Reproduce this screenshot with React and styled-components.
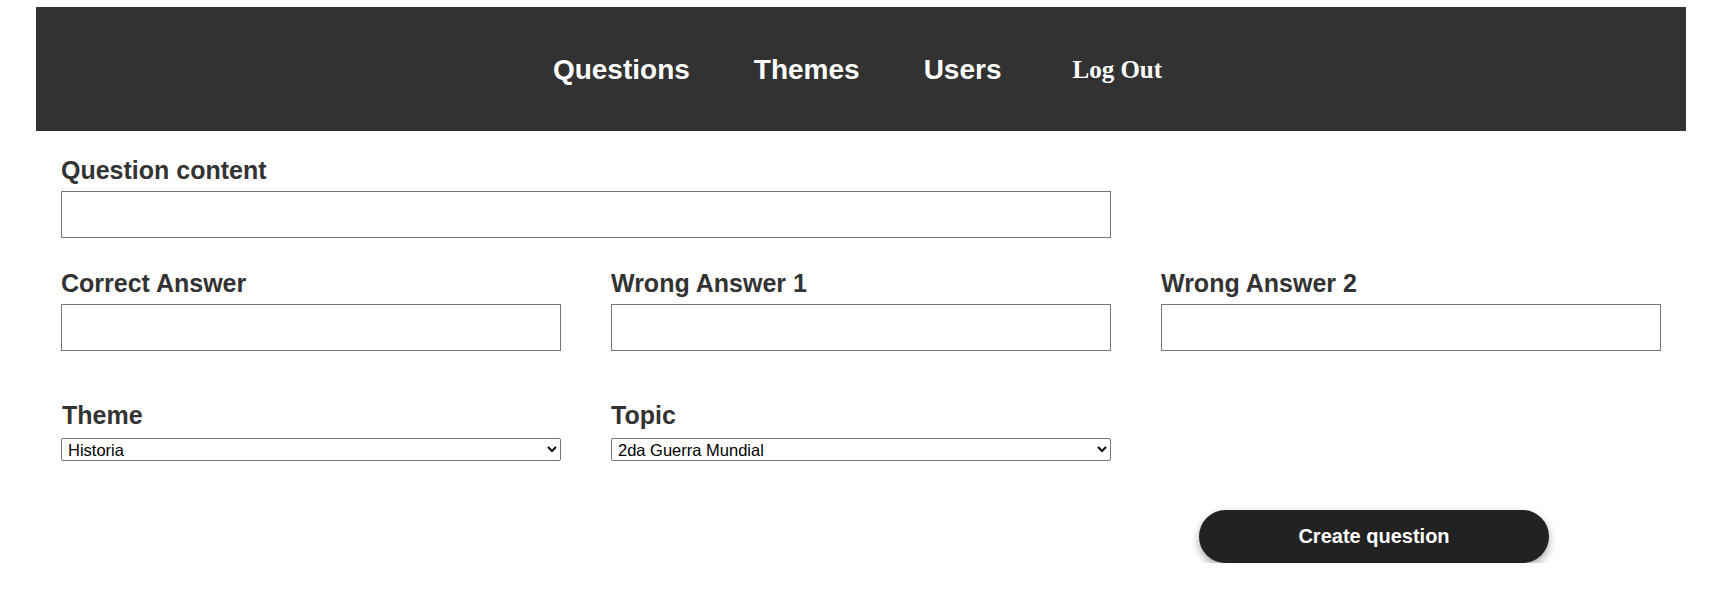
import React from "react";
import styled, { createGlobalStyle } from "styled-components";

const GlobalStyle = createGlobalStyle`
  html, body {
    margin: 0;
    padding: 0;
    background: #ffffff;
    font-family: "Liberation Sans", Arial, sans-serif;
  }
`;

const Page = styled.div`
  width: 1650px;
  margin: 7px 0 0 36px;
`;

const Header = styled.header`
  height: 124px;
  background: #323232;
  display: flex;
  align-items: center;
  justify-content: center;
  padding-right: 7px;
`;

const Nav = styled.nav`
  display: flex;
  align-items: center;
  gap: 64px;
  margin-top: 1px;
`;

const NavLink = styled.a`
  font-family: "Liberation Sans", Arial, sans-serif;
  font-size: 28px;
  font-weight: 700;
  color: #ffffff;
  text-decoration: none;
  line-height: 32px;
`;

const LogOut = styled.button`
  font-family: "Liberation Serif", "Times New Roman", serif;
  font-size: 25px;
  font-weight: 700;
  color: #ffffff;
  background: transparent;
  border: none;
  padding: 0;
  margin-left: 7px;
  line-height: 32px;
  cursor: pointer;
`;

const Form = styled.form`
  display: grid;
  grid-template-columns: repeat(3, 500px);
  column-gap: 50px;
  padding: 25px 25px 0;
`;

const Field = styled.div`
  display: flex;
  flex-direction: column;
  gap: ${(p) => p.$gap}px;
  grid-column: span ${(p) => p.$span || 1};
  margin-top: ${(p) => p.$top || 0}px;
`;

const Label = styled.label`
  font-size: 25px;
  font-weight: 700;
  color: #333333;
  line-height: 29px;
  padding-left: ${(p) => p.$indent || 0}px;
`;

const TextInput = styled.input`
  box-sizing: border-box;
  width: 100%;
  height: 47px;
  border: 1px solid #767676;
  border-radius: 0;
  background: #ffffff;
  padding: 0 8px;
  font-family: "Liberation Sans", Arial, sans-serif;
  font-size: 16px;
  outline: none;
`;

const Select = styled.select`
  box-sizing: border-box;
  width: 100%;
  height: 23px;
  border: 1px solid #767676;
  border-radius: 2px;
  background: #ffffff;
  color: #000000;
  font-family: "Liberation Sans", Arial, sans-serif;
  font-size: 16.5px;
  padding: 0 2px;
`;

const ButtonCell = styled.div`
  grid-column: 3;
  margin-top: 49px;
  padding-left: 38px;
`;

const SubmitButton = styled.button`
  width: 350px;
  height: 53px;
  border: none;
  border-radius: 27px;
  background: #222222;
  color: #ffffff;
  font-family: "Liberation Sans", Arial, sans-serif;
  font-size: 20px;
  font-weight: 700;
  box-shadow: 0 4px 9px rgba(0, 0, 0, 0.35);
  cursor: pointer;
`;

export default function App() {
  return (
    <>
      <GlobalStyle />
      <Page>
        <Header>
          <Nav>
            <NavLink href="#">Questions</NavLink>
            <NavLink href="#">Themes</NavLink>
            <NavLink href="#">Users</NavLink>
            <LogOut type="button">Log Out</LogOut>
          </Nav>
        </Header>
        <Form onSubmit={(e) => e.preventDefault()}>
          <Field $span={2} $gap={6}>
            <Label>Question content</Label>
            <TextInput type="text" />
          </Field>
          <div />
          <Field $gap={6} $top={31}>
            <Label>Correct Answer</Label>
            <TextInput type="text" />
          </Field>
          <Field $gap={6} $top={31}>
            <Label>Wrong Answer 1</Label>
            <TextInput type="text" />
          </Field>
          <Field $gap={6} $top={31}>
            <Label>Wrong Answer 2</Label>
            <TextInput type="text" />
          </Field>
          <Field $gap={8} $top={50}>
            <Label $indent={1}>Theme</Label>
            <Select defaultValue="Historia">
              <option>Historia</option>
            </Select>
          </Field>
          <Field $gap={8} $top={50}>
            <Label>Topic</Label>
            <Select defaultValue="2da Guerra Mundial">
              <option>2da Guerra Mundial</option>
            </Select>
          </Field>
          <div />
          <ButtonCell>
            <SubmitButton type="submit">Create question</SubmitButton>
          </ButtonCell>
        </Form>
      </Page>
    </>
  );
}
